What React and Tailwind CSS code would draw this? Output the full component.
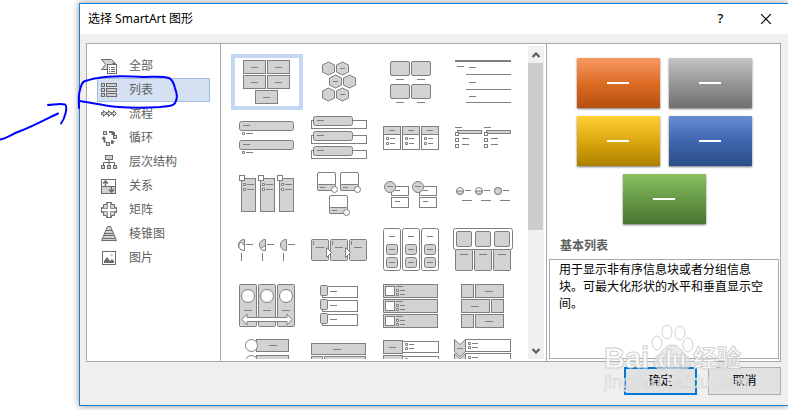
import React, { useState } from 'react';

const STROKE = '#7f7f7f';
const FILL = '#d2d2d2';

/* ---------- drawing primitives for the thumbnails ---------- */

const Box = ({ x, y, w, h, r = 0, fill = FILL }) => (
  <rect x={x + 0.5} y={y + 0.5} width={w - 1} height={h - 1} rx={r} fill={fill} stroke={STROKE} />
);

const Dash = ({ x, y, w = 7, h = 1 }) => <rect x={x} y={y} width={w} height={h} fill={STROKE} />;

const Ring = ({ x, y, r, fill = 'white' }) => <circle cx={x} cy={y} r={r} fill={fill} stroke={STROKE} />;

const Bullet = ({ x, y, w = 5, gap = 3 }) => (
  <>
    <rect x={x - 1} y={y - 1} width="3" height="3" rx="1" fill={STROKE} />
    <rect x={x} y={y} width="1" height="1" fill="white" />
    <Dash x={x + gap} y={y} w={w} />
  </>
);

const Repeat = ({ at, dx = 0, dy = 0, children }) =>
  at.map((n) => (
    <g key={n} transform={`translate(${n * dx} ${n * dy})`}>
      {children}
    </g>
  ));

const Hexagon = ({ x, y, dash }) => (
  <>
    <path d={`M${x} ${y - 6.5}l6 3v7l-6 3l-6 -3v-7z`} fill={FILL} stroke={STROKE} />
    {dash && <Dash x={x - 2.5} y={y - 0.5} w={5} />}
  </>
);

const layouts = [
  {
    name: '基本列表',
    art: (
      <>
        {[[12, 6], [36, 6], [12, 21], [36, 21], [24, 36]].map(([x, y]) => (
          <g key={`${x}-${y}`}>
            <Box x={x} y={y} w={23} h={14} />
            <Dash x={x + 8} y={y + 7} />
          </g>
        ))}
      </>
    ),
  },
  {
    name: '交替六边形',
    art: (
      <>
        <Hexagon x={25.5} y={14.5} />
        <Hexagon x={39.5} y={14.5} dash />
        <Hexagon x={32.5} y={27.5} dash />
        <Hexagon x={46.5} y={27.5} />
        <Hexagon x={25.5} y={40.5} />
        <Hexagon x={39.5} y={40.5} dash />
      </>
    ),
  },
  {
    name: '图片题注列表',
    art: (
      <>
        {[[15, 7], [36, 7], [15, 30], [36, 30]].map(([x, y]) => (
          <g key={`${x}-${y}`}>
            <Box x={x} y={y} w={20} h={15} r={1.5} />
            <Dash x={x + 6} y={y + 18} w={8} />
          </g>
        ))}
      </>
    ),
  },
  {
    name: '线型列表',
    art: (
      <>
        <Dash x={8} y={6} w={56} h={2} />
        <Dash x={10} y={12} />
        <Dash x={22} y={13} />
        <Dash x={19} y={20} w={45} />
        <Dash x={22} y={28} />
        <Dash x={19} y={35} w={45} />
        <Dash x={22} y={42} />
        <Dash x={19} y={48} w={45} />
      </>
    ),
  },
  {
    name: '垂直项目符号列表',
    art: (
      <Repeat at={[0, 1]} dy={19}>
        <Box x={8} y={11} w={55} h={10} r={2} />
        <Dash x={12} y={15} />
        <Bullet x={12} y={23} w={7} />
      </Repeat>
    ),
  },
  {
    name: '垂直框列表',
    art: (
      <Repeat at={[0, 1, 2]} dy={15}>
        <Box x={8} y={10} w={56} h={9} fill="white" />
        <Box x={10} y={6} w={40} h={10} r={2} />
        <Dash x={14} y={10} />
      </Repeat>
    ),
  },
  {
    name: '水平项目符号列表',
    art: (
      <Repeat at={[0, 1, 2]} dx={19}>
        <Box x={8} y={16} w={18} h={24} fill="white" />
        <Box x={8} y={16} w={18} h={9} />
        <Dash x={14} y={20} w={6} />
        <Bullet x={12} y={28} />
        <Bullet x={12} y={33} />
      </Repeat>
    ),
  },
  {
    name: '方形重点列表',
    art: (
      <Repeat at={[0, 1]} dx={29}>
        <Dash x={8} y={17} />
        <Box x={10} y={20} w={25} h={4} />
        <Box x={8} y={22} w={4} h={4} fill="white" />
        <Box x={8} y={28} w={4} h={4} fill="white" />
        <Box x={8} y={34} w={4} h={4} fill="white" />
        <Dash x={15} y={28} />
        <Dash x={15} y={34} />
      </Repeat>
    ),
  },
  {
    name: '图片重点列表',
    art: (
      <Repeat at={[0, 1, 2]} dx={19}>
        <Box x={10} y={12} w={15} h={34} />
        <Box x={8} y={9} w={6} h={6} fill="white" />
        <Bullet x={13} y={18} w={7} />
        <Bullet x={13} y={23} w={7} />
      </Repeat>
    ),
  },
  {
    name: '蛇形图片重点列表',
    art: (
      <>
        {[[14, 6], [37, 6], [26, 29]].map(([x, y]) => (
          <g key={x}>
            <Box x={x} y={y} w={19} h={19} r={1.5} fill="white" />
            <Box x={x} y={y + 12} w={19} h={7} r={1} />
            <Dash x={x + 3} y={y + 15} w={5} />
            <Ring x={x + 17.5} y={y + 17.5} r={3} />
          </g>
        ))}
      </>
    ),
  },
  {
    name: '堆叠列表',
    art: (
      <Repeat at={[0, 1]} dx={28}>
        <Box x={16} y={20} w={18} h={10} fill="white" />
        <Box x={16} y={31} w={18} h={11} fill="white" />
        <Dash x={20} y={24} w={5} />
        <Dash x={20} y={35} w={5} />
        <Ring x={15} y={21} r={5.5} fill={FILL} />
        <Dash x={12} y={20} w={6} />
      </Repeat>
    ),
  },
  {
    name: '递增圆形流程',
    art: (
      <>
        <Repeat at={[0, 1, 2]} dx={19}>
          <Ring x={13} y={25} r={3.5} />
          <Dash x={18} y={24} w={6} />
          <Dash x={15} y={34} w={10} />
        </Repeat>
        <path d="M9.5 25h7a3.5 3.5 0 0 1-7 0zM28.5 25h7a3.5 3.5 0 0 1-7 0z" fill={FILL} stroke={STROKE} />
        <Ring x={51} y={25} r={3.5} fill={FILL} />
      </>
    ),
  },
  {
    name: '饼图流程',
    art: (
      <>
        <Repeat at={[0, 1, 2]} dx={21}>
          <path d="M13.5 17.5v11c-8 0-8-11 0-11z" fill={FILL} stroke={STROKE} />
          <Dash x={15} y={22} />
          <Dash x={10} y={31} w={1} h={8} />
        </Repeat>
        <path d="M13.5 23.5l-4-3.5c-3 3-2 8.500 4 8.500z" fill="white" stroke={STROKE} />
        <path d="M34.500 23.500l-5 3c1 1.500 3 2 5 2z" fill="white" stroke={STROKE} />
      </>
    ),
  },
  {
    name: '详细流程',
    art: (
      <>
        <Repeat at={[0, 1, 2]} dx={19}>
          <Box x={8} y={17} w={18} h={22} r={1} />
          <Dash x={10} y={19} w={1} h={4} />
          <Dash x={13} y={25} w={8} />
        </Repeat>
        <Repeat at={[0, 1]} dx={19}>
          <path d="M23.5 25.500v10l5-5z" fill="white" stroke={STROKE} />
        </Repeat>
      </>
    ),
  },
  {
    name: '分组列表',
    art: (
      <Repeat at={[0, 1, 2]} dx={19}>
        <Box x={8} y={6} w={18} h={43} r={2} fill="white" />
        <Dash x={14} y={14} w={6} />
        <Box x={11} y={22} w={12} h={11} r={2} />
        <Dash x={14} y={27} w={6} />
        <Box x={11} y={35} w={12} h={11} r={2} />
        <Dash x={14} y={40} w={6} />
      </Repeat>
    ),
  },
  {
    name: '水平图片列表',
    art: (
      <>
        <Repeat at={[0, 1, 2]} dx={19}>
          <Box x={8} y={27} w={18} h={22} r={1} />
          <Dash x={13} y={32} w={8} />
        </Repeat>
        <Box x={6} y={6} w={60} h={22} r={2} fill="white" />
        <Repeat at={[0, 1, 2]} dx={19}>
          <Box x={9} y={9} w={16} h={16} r={1.5} />
        </Repeat>
      </>
    ),
  },
  {
    name: '连续图片列表',
    art: (
      <>
        <Repeat at={[0, 1, 2]} dx={19}>
          <Box x={8} y={6} w={18} h={43} r={1} />
          <Ring x={17} y={18} r={6.5} />
          <Dash x={13} y={32} w={8} />
        </Repeat>
        <path d="M11 41.500l5-5.500v3.500h40v-3.500l5 5.500l-5 5.500v-3.500h-40v3.500z" fill="white" stroke={STROKE} />
      </>
    ),
  },
  {
    name: '垂直图片重点列表',
    art: (
      <Repeat at={[0, 1, 2]} dy={14}>
        <Box x={19} y={8} w={36} h={12} fill="white" />
        <Box x={17} y={7} w={8} h={11} r={1} />
        <Dash x={27} y={13} />
      </Repeat>
    ),
  },
  {
    name: '垂直图片列表',
    art: (
      <Repeat at={[0, 1, 2]} dy={15}>
        <Box x={8} y={6} w={55} h={14} />
        <Box x={10} y={8} w={10} h={10} fill="white" />
        <Dash x={21} y={8} />
        <Bullet x={22} y={12} />
        <Bullet x={22} y={16} />
      </Repeat>
    ),
  },
  {
    name: '交替图片块',
    art: (
      <>
        <Repeat at={[0, 1]} dy={30}>
          <Box x={14} y={6} w={13} h={14} />
          <Box x={28} y={6} w={29} h={14} />
          <Dash x={38} y={13} w={8} />
        </Repeat>
        <Box x={14} y={21} w={29} h={14} />
        <Box x={44} y={21} w={13} h={14} />
        <Dash x={24} y={28} w={8} />
      </>
    ),
  },
  {
    name: '垂直曲形列表',
    art: (
      <Repeat at={[0, 1]} dy={16}>
        <Box x={25} y={5} w={33} h={13} />
        <Ring x={20.5} y={11.5} r={6} />
        <Dash x={38} y={11} w={8} />
      </Repeat>
    ),
  },
  {
    name: '层次结构列表',
    art: (
      <>
        <Box x={8} y={9} w={55} h={12} />
        <Dash x={30} y={15} w={8} />
        <Box x={8} y={22} w={12} h={12} />
        <Box x={21} y={22} w={42} h={12} />
      </>
    ),
  },
  {
    name: '垂直块列表',
    art: (
      <Repeat at={[0, 1]} dy={15}>
        <Box x={8} y={6} w={20} h={14} />
        <Box x={27} y={7} w={37} h={12} fill="white" />
        <Dash x={14} y={13} />
        <Bullet x={31} y={10} />
        <Bullet x={31} y={14} />
      </Repeat>
    ),
  },
  {
    name: '垂直 V 形列表',
    art: (
      <Repeat at={[0, 1]} dy={14}>
        <Box x={18} y={5} w={46} h={13} fill="white" />
        <path d="M7.500 5.500l5.500 5l5.500-5v12l-5.500 5l-5.500-5z" fill={FILL} stroke={STROKE} />
        <Dash x={10} y={14} w={6} />
        <Bullet x={22} y={9} w={6} />
        <Bullet x={22} y={13} w={6} />
      </Repeat>
    ),
  },
];

/* ---------- category icons, 16 x 16 ---------- */

const INK = '#6b6b6b';

const categories = [
  {
    name: '全部',
    icon: (
      <>
        <path d="M.5 1.500h10l4 4h-3v6h-11l4-5z" fill={FILL} stroke={INK} />
        <rect x="6.500" y="6.500" width="9" height="9" fill="white" stroke={INK} />
        <path d="M8 9.500h1M10 9.500h4M8 11.500h1M10 11.500h4M8 13.500h1M10 13.500h4" stroke={INK} />
      </>
    ),
  },
  {
    name: '列表',
    icon: (
      <g fill={FILL} stroke={INK}>
        {[1.5, 6.5, 11.5].map((y) => (
          <g key={y}>
            <rect x=".5" y={y} width="3" height="3" />
            <rect x="5.500" y={y} width="10" height="3" />
          </g>
        ))}
      </g>
    ),
  },
  {
    name: '流程',
    icon: (
      <g fill={FILL} stroke={INK}>
        {[0, 5, 10].map((x) => (
          <path key={x} d={`M${x + 0.5} 6.500h2v-2l3 3l-3 3v-2h-2z`} />
        ))}
      </g>
    ),
  },
  {
    name: '循环',
    icon: (
      <>
        <g fill={FILL} stroke={INK}>
          <rect x="2.500" y="1.500" width="3" height="3" />
          <rect x="12.500" y="5.500" width="3" height="3" />
          <rect x="5.500" y="12.500" width="3" height="3" />
        </g>
        <path d="M8 1h3l3 1v3h-4l1-2h-3zM0 9l3-3l2 3h-1l1 3l-2 1l-1-4zM10 14v-4l4 1l-1 1l-1 2z" fill={INK} />
      </>
    ),
  },
  {
    name: '层次结构',
    icon: (
      <g fill={FILL} stroke={INK}>
        <path d="M8 6v5M2.500 11v-2.500h11v2.500" fill="none" />
        <rect x="4.500" y="1.500" width="7" height="4" />
        <rect x=".5" y="11.500" width="3" height="3" />
        <rect x="6.500" y="11.500" width="3" height="3" />
        <rect x="12.500" y="11.500" width="3" height="3" />
      </g>
    ),
  },
  {
    name: '关系',
    icon: (
      <>
        <rect x=".5" y="1.500" width="14" height="14" fill="white" stroke={INK} />
        <rect x=".5" y="8.500" width="14" height="7" fill={FILL} stroke={INK} />
        <path d="M4.500 8v-5M2 5.500l2.500-2.500l2.500 2.500M10.500 9v5M8 11.500l2.500 2.500l2.500-2.500" fill="none" stroke={INK} strokeWidth="1.500" />
      </>
    ),
  },
  {
    name: '矩阵',
    icon: (
      <>
        <path
          d="M5.500 .5h5v2h3v3h2v5h-2v3h-3v2h-5v-2h-3v-3h-2v-5h2v-3h3z"
          fill={FILL}
          stroke={INK}
          strokeLinejoin="round"
        />
        <path d="M8 1v14M1 8h14" stroke={INK} strokeWidth="4" />
        <path d="M8 1v14M1 8h14" stroke="white" strokeWidth="2.500" />
      </>
    ),
  },
  {
    name: '棱锥图',
    icon: (
      <>
        <path d="M6.500 .5h3l6 14h-15z" fill={FILL} stroke={INK} />
        <path d="M5 4.500h6M4 7.500h8M3 9.500h10M2 12.500h12" stroke={INK} />
      </>
    ),
  },
  {
    name: '图片',
    icon: (
      <>
        <rect x="1.500" y="1.500" width="13" height="13" fill="white" stroke={INK} />
        <path d="M3 13v-2l3-4l3 4l2-2l2 2v2z" fill={INK} />
        <circle cx="10.500" cy="5" r="1.500" fill={FILL} />
      </>
    ),
  },
];

const tiles = [
  'from-[#f79a62] via-[#dd6c22] to-[#b5500f]',
  'from-[#c4c4c4] via-[#979797] to-[#707070]',
  'from-[#ffcf33] via-[#dba90f] to-[#ad8000]',
  'from-[#668dd2] via-[#3f67ae] to-[#2c4d87]',
  'from-[#8bc163] via-[#679a47] to-[#4a752f]',
];

const TitleBar = () => (
  <header className="flex h-[30px] items-center bg-white pl-2 text-black">
    <h1 className="flex-1 text-[12px]">选择 SmartArt 图形</h1>
    <button type="button" aria-label="帮助" className="flex h-full w-[45px] items-center justify-center text-[13px] font-medium">
      ?
    </button>
    <button type="button" aria-label="关闭" className="flex h-full w-[45px] items-center justify-center">
      <svg width="10" height="10" viewBox="0 0 10 10" stroke="black" strokeWidth="1.200">
        <path d="M0 0l10 10M10 0l-10 10" />
      </svg>
    </button>
  </header>
);

const CategoryList = ({ selected, onSelect }) => (
  <nav className="w-[134px] shrink-0 border-r border-[#a6a9b0] p-[10px]">
    <ul>
      {categories.map(({ name, icon }) => (
        <li key={name}>
          <button
            type="button"
            onClick={() => onSelect(name)}
            className={`flex h-6 w-full items-center gap-3 border px-[3px] text-[12px] text-[#606060] ${
              selected === name ? 'border-[#a3bde3] bg-[#d5e0f2]' : 'border-transparent'
            }`}
          >
            <svg width="16" height="16" viewBox="0 0 16 16" fill="none">
              {icon}
            </svg>
            {name}
          </button>
        </li>
      ))}
    </ul>
  </nav>
);

const Gallery = ({ selected, onSelect }) => (
  <section className="flex w-[326px] shrink-0 border-r border-[#a6a9b0] py-[2px] pr-[2px]">
    <div className="h-[313px] flex-1 overflow-hidden pt-2 pl-[10px]">
      <div className="grid w-72 grid-cols-4">
        {layouts.map(({ name, art }, i) => (
          <button
            key={name}
            type="button"
            aria-label={name}
            onClick={() => onSelect(i)}
            className={`h-14 ${selected === i ? 'inset-ring-4 inset-ring-[#c3d6f2]' : ''}`}
          >
            <svg width="72" height="56" viewBox="0 0 72 56">
              {art}
            </svg>
          </button>
        ))}
      </div>
    </div>
    <div className="flex w-4 flex-col bg-[#f0f0f0]">
      <button type="button" aria-label="向上滚动" className="flex h-[17px] items-center justify-center">
        <svg width="8" height="6" viewBox="0 0 8 6" fill="none" stroke="#555" strokeWidth="2">
          <path d="M.5 5l3.500-3.500l3.500 3.500" />
        </svg>
      </button>
      <div className="flex-1">
        <div className="h-[167px] w-[15px] bg-[#cdcdcd]" />
      </div>
      <button type="button" aria-label="向下滚动" className="flex h-[17px] items-center justify-center">
        <svg width="8" height="6" viewBox="0 0 8 6" fill="none" stroke="#555" strokeWidth="2">
          <path d="M.5 1l3.500 3.500l3.500-3.500" />
        </svg>
      </button>
    </div>
  </section>
);

const Preview = () => (
  <section className="flex min-w-0 flex-1 flex-col pt-[14px] pr-px pb-[2px] pl-[2px]">
    <div className="mx-auto flex w-[176px] flex-wrap justify-center gap-x-[9px] gap-y-2">
      {tiles.map((color) => (
        <div
          key={color}
          className={`flex h-[50px] w-[83px] items-center justify-center bg-linear-to-b shadow-[0_1px_2px_rgba(0,0,0,0.55)] ${color}`}
        >
          <span className="h-[2px] w-[22px] bg-white" />
        </div>
      ))}
    </div>
    <h2 className="mt-3 pl-[11px] text-[12px] leading-5 font-bold text-[#606060]">基本列表</h2>
    <p className="mt-[3px] flex-1 border border-[#a6a9b0] pt-px pr-2 pl-[9px] text-[12px] leading-[17px] text-black">
      用于显示非有序信息块或者分组信息块。可最大化形状的水平和垂直显示空间。
    </p>
  </section>
);

const Watermark = () => (
  <svg
    className="pointer-events-none absolute right-[40px] bottom-[12px]"
    width="150"
    height="74"
    viewBox="0 0 150 74"
    fill="white"
    fillOpacity="0.6"
    stroke="#cfcfcf"
    fontFamily='"Liberation Sans", "Noto Sans CJK SC", sans-serif'
    fontWeight="bold"
  >
    <ellipse cx="59" cy="24" rx="5" ry="7" />
    <ellipse cx="69" cy="13" rx="5" ry="7" />
    <ellipse cx="82" cy="14" rx="5" ry="7" />
    <ellipse cx="90" cy="26" rx="5" ry="7" />
    <path
      d="M74 26c-8 0-9 7-15 11c-7 6-3 14 6 13c6-1 13-1 19 0c9 1 12-7 5-13c-6-4-7-11-15-11z"
      fill="#dcdcdc"
    />
    <text x="6" y="49" fontSize="29" fillOpacity="0.8">
      Bai
    </text>
    <text x="60" y="48" fontSize="23" fillOpacity="0.9">
      du
    </text>
    <text x="95" y="48" fontSize="24" fillOpacity="0.8">
      经验
    </text>
    <text x="6" y="69" fontSize="18" fontWeight="normal" stroke="#d4d4d4" strokeWidth="0.700">
      jingyan.baidu.com
    </text>
  </svg>
);

const PenMarks = () => (
  <svg
    className="pointer-events-none absolute top-0 left-0"
    width="190"
    height="150"
    viewBox="0 0 190 150"
    fill="none"
    stroke="#0000ff"
    strokeWidth="2"
    strokeLinecap="round"
    strokeLinejoin="round"
  >
    <path d="M0 139.500c7-1 11-5 19-8c12-4 26-12 39-18" />
    <path d="M48 105c5 0 11-2 17-.5c3 2 0 14-4 19" />
    <path d="M79 108c0-7-1-13 1-18c1-5 2-8 5-9c5-1 8-3 13-3c14-3 31-2 46-1c10 0 18-1 25 1c4 2 5 6 6 10c2 6 3 10 0 15c-2 4-9 3-15 4c-14 1-28 1-42 0c-14-1-25-4-38-6" />
  </svg>
);

export default function App() {
  const [category, setCategory] = useState('列表');
  const [layout, setLayout] = useState(0);

  return (
    <div className="relative min-h-screen overflow-hidden bg-white pt-[3px] pb-1 pl-[79px] font-['Noto_Sans','Noto_Sans_CJK_SC',sans-serif]">
      <main className="relative border-y border-l border-[#1a7fd0] bg-[#efefef] shadow-[0_0_7px_rgba(0,0,0,0.45)]">
        <TitleBar />
        <div className="mt-[9px] mr-[7px] ml-[6px] flex border border-[#a6a9b0] bg-white">
          <CategoryList selected={category} onSelect={setCategory} />
          <Gallery selected={layout} onSelect={setLayout} />
          <Preview />
        </div>
        <footer className="flex justify-end gap-[11px] pt-[5px] pr-[7px] pb-[10px] text-[12px] text-black">
          <button type="button" className="h-7 w-[73px] border-2 border-[#0078d7] bg-[#e1e1e1]">
            确定
          </button>
          <button type="button" className="h-7 w-[73px] border border-[#adadad] bg-[#e1e1e1]">
            取消
          </button>
        </footer>
        <Watermark />
      </main>
      <PenMarks />
    </div>
  );
}
